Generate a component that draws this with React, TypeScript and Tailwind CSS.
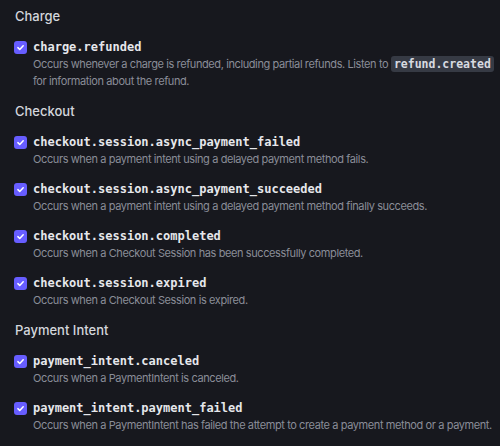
import type { ReactNode } from 'react';

interface EventItem {
  name: string;
  description: ReactNode;
}

interface EventGroup {
  title: string;
  events: EventItem[];
}

const mono = "font-['DejaVu_Sans_Mono','Liberation_Mono',monospace]";

const groups: EventGroup[] = [
  {
    title: 'Charge',
    events: [
      {
        name: 'charge.refunded',
        description: (
          <>
            Occurs whenever a charge is refunded, including partial refunds. Listen to{' '}
            <code
              className={`${mono} whitespace-nowrap rounded-[3px] bg-[#363a44] px-[3px] py-[1px] text-[11.5px] font-bold tracking-normal text-[#d8dae0]`}
            >
              refund.created
            </code>{' '}
            for information about the refund.
          </>
        ),
      },
    ],
  },
  {
    title: 'Checkout',
    events: [
      {
        name: 'checkout.session.async_payment_failed',
        description: 'Occurs when a payment intent using a delayed payment method fails.',
      },
      {
        name: 'checkout.session.async_payment_succeeded',
        description: 'Occurs when a payment intent using a delayed payment method finally succeeds.',
      },
      {
        name: 'checkout.session.completed',
        description: 'Occurs when a Checkout Session has been successfully completed.',
      },
      {
        name: 'checkout.session.expired',
        description: 'Occurs when a Checkout Session is expired.',
      },
    ],
  },
  {
    title: 'Payment Intent',
    events: [
      {
        name: 'payment_intent.canceled',
        description: 'Occurs when a PaymentIntent is canceled.',
      },
      {
        name: 'payment_intent.payment_failed',
        description:
          'Occurs when a PaymentIntent has failed the attempt to create a payment method or a payment.',
      },
    ],
  },
];

function CheckBox() {
  return (
    <span className="mt-[1px] flex h-[13px] w-[13px] shrink-0 items-center justify-center rounded-[3px] bg-[#675dff]">
      <svg width="9" height="9" viewBox="0 0 12 12" fill="none">
        <path
          d="M2.5 6.2 5 8.6 9.6 3.6"
          stroke="white"
          strokeWidth="2"
          strokeLinecap="round"
          strokeLinejoin="round"
        />
      </svg>
    </span>
  );
}

export default function App() {
  return (
    <div className="h-[446px] w-[500px] overflow-hidden bg-[#17181e] pl-[14px] pr-[4px] pt-[7px] font-['Inter','Noto_Sans',sans-serif]">
      {groups.map((group) => (
        <section key={group.title} className="mb-[12px]">
          {/* 分组标题 */}
          <h2 className="pl-[1px] text-[13px] font-medium leading-[18px] text-[#d4d6dc]">{group.title}</h2>
          <div className="mt-[15px] flex flex-col gap-[14px]">
            {group.events.map((event) => (
              <label key={event.name} className="flex items-start gap-[6px]">
                <CheckBox />
                <div>
                  <div className={`${mono} text-[12px] font-bold leading-[15px] text-[#e6e7eb]`}>
                    {event.name}
                  </div>
                  <p className="mt-[1px] text-[11px] leading-[17px] tracking-[-0.4px] text-[#8a8d98]">
                    {event.description}
                  </p>
                </div>
              </label>
            ))}
          </div>
        </section>
      ))}
    </div>
  );
}
